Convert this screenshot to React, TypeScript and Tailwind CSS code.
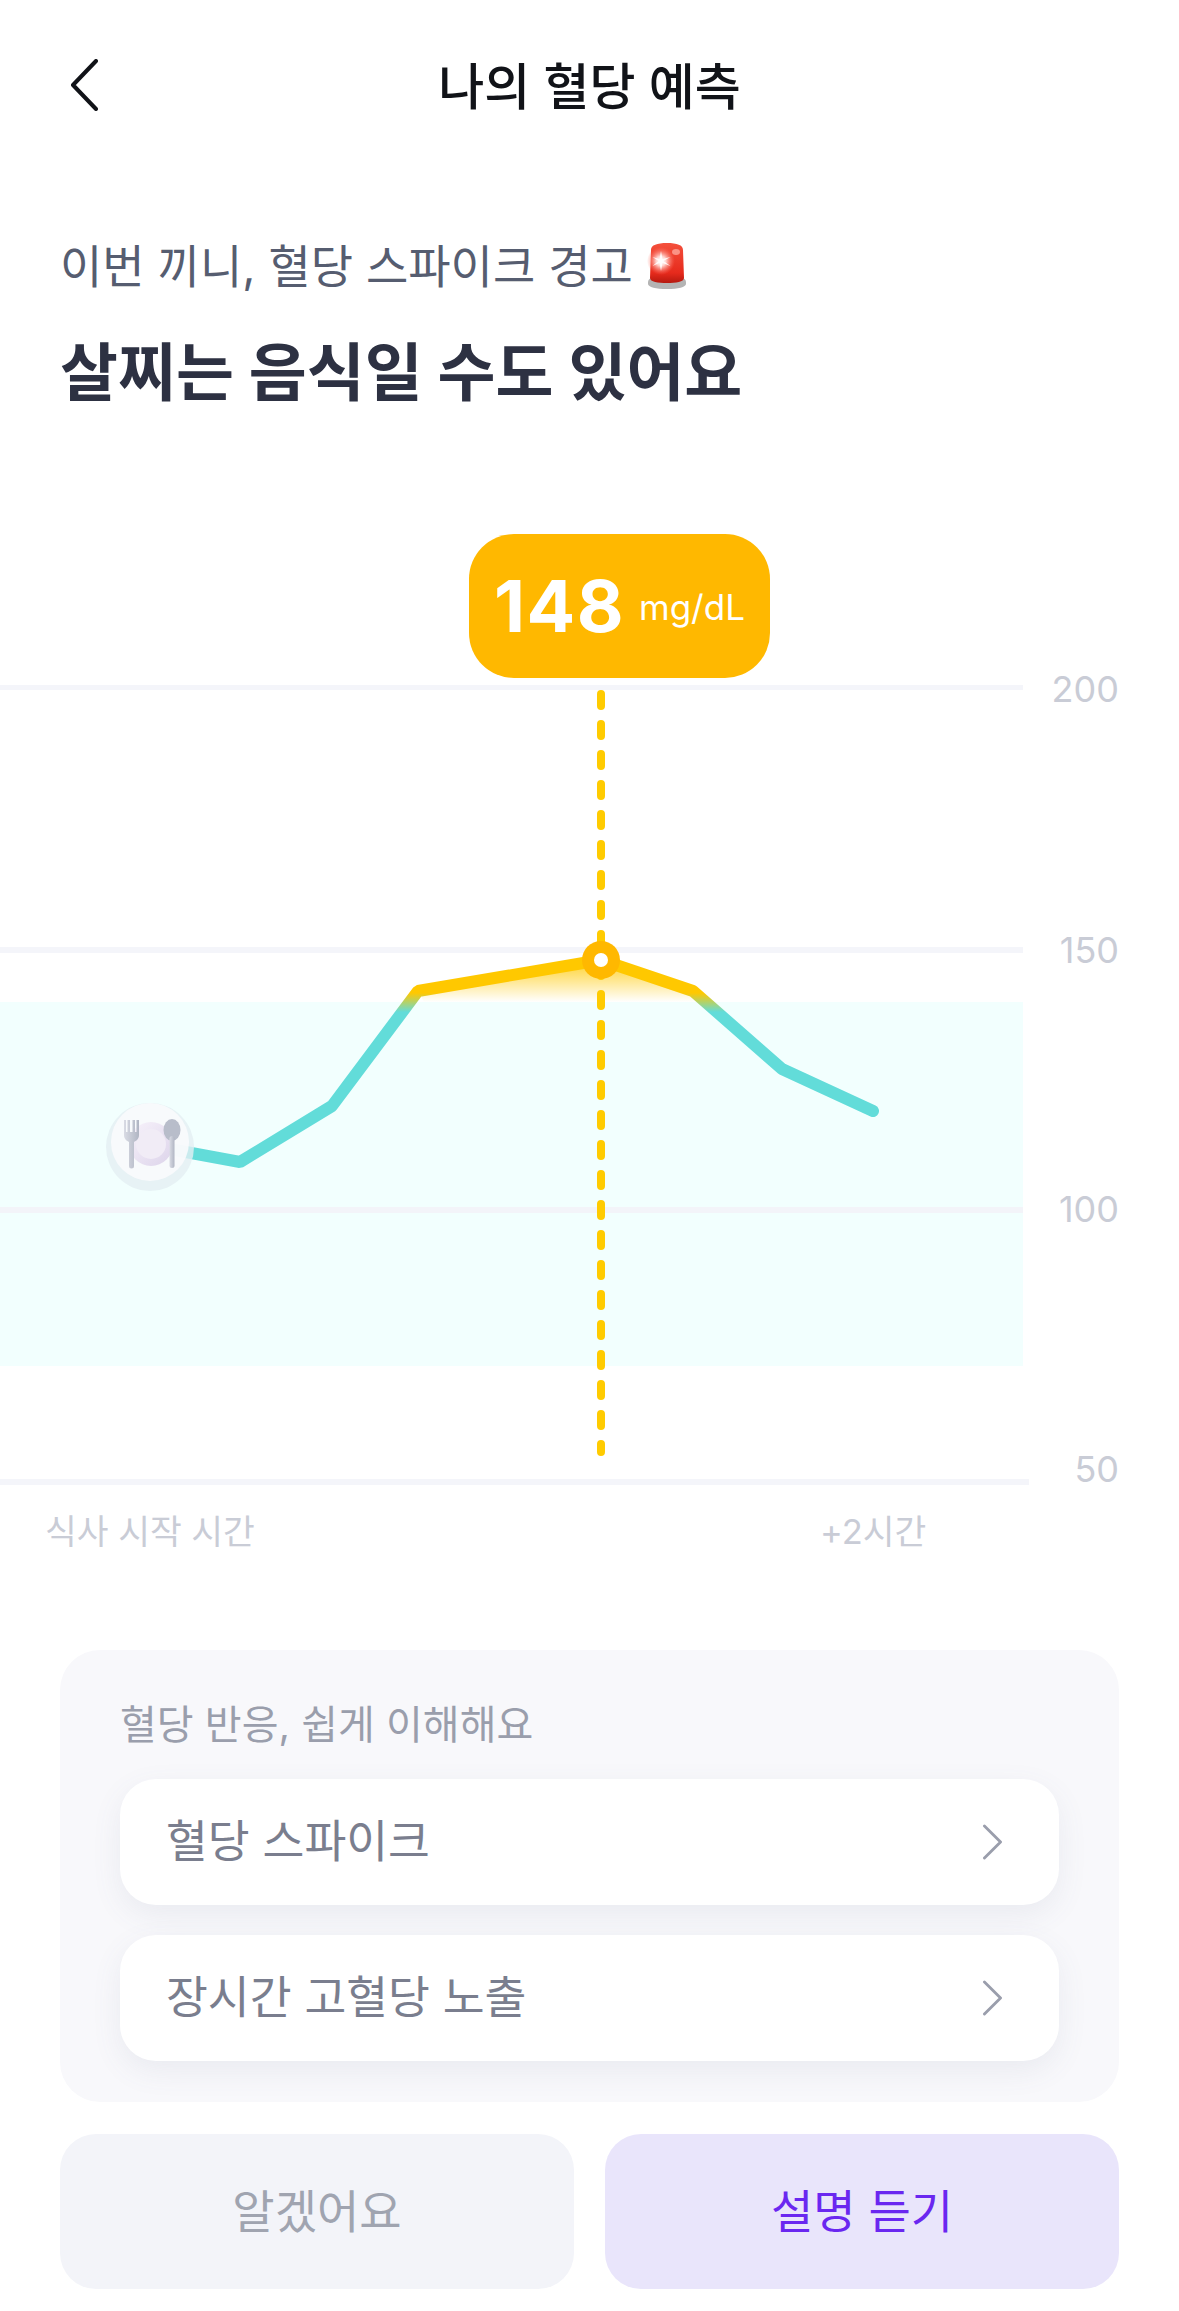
const fontStack = { fontFamily: 'Inter, "Noto Sans CJK KR", sans-serif' }

const linePoints = '175,1150 240,1162 332,1106 418,991 601,960 693,991 782,1069 873,1111'

function SirenIcon() {
  return (
    <svg viewBox="0 0 40 48" className="h-[48px] w-[40px]">
      <defs>
        <linearGradient id="sirenBody" x1="0" y1="0" x2="0" y2="1">
          <stop offset="0" stopColor="#f4503c" />
          <stop offset="0.75" stopColor="#e62a1c" />
          <stop offset="1" stopColor="#b5190f" />
        </linearGradient>
        <radialGradient id="sirenFlash">
          <stop offset="0" stopColor="#ffffff" />
          <stop offset="0.35" stopColor="#ffd5cf" />
          <stop offset="1" stopColor="#ff6b5c" stopOpacity="0" />
        </radialGradient>
      </defs>
      <path d="M1 40c0-2 2-4 4-4h30c2 0 4 2 4 4v2c0 3-8 5-19 5S1 45 1 42z" fill="#b4b4b4" />
      <path d="M4 8c0-5 6-7 16-7s16 2 16 7l1 28c0 4-8 5-17 5S3 40 3 36z" fill="url(#sirenBody)" />
      <circle cx="14" cy="19" r="14" fill="url(#sirenFlash)" />
      <path d="M14 9l1.500 8 8-2-7 4 7 5-8-3-1.500 8-1.500-8-7 3 6-5-6-4 7 2z" fill="#ffffff" opacity="0.85" />
      <ellipse cx="29" cy="10" rx="4" ry="3" fill="#ffb3a8" opacity="0.7" />
    </svg>
  )
}

function Chevron({ className }: { className: string }) {
  return (
    <svg viewBox="0 0 21 38" fill="none" className={className}>
      <path d="M2 2l17 17L2 36" stroke="currentColor" strokeWidth="3" strokeLinecap="round" strokeLinejoin="round" />
    </svg>
  )
}

function GlucoseChart() {
  return (
    <svg viewBox="0 534 1179 1030" className="absolute inset-0 h-full w-full" fill="none">
      <defs>
        <linearGradient id="curveStroke" gradientUnits="userSpaceOnUse" x1="0" y1="993" x2="0" y2="1012">
          <stop offset="0" stopColor="#ffc800" />
          <stop offset="1" stopColor="#62dcd9" />
        </linearGradient>
        <linearGradient id="overFill" gradientUnits="userSpaceOnUse" x1="0" y1="965" x2="0" y2="1002">
          <stop offset="0" stopColor="#ffc800" stopOpacity="0.75" />
          <stop offset="1" stopColor="#ffc800" stopOpacity="0" />
        </linearGradient>
        <linearGradient id="plate" x1="0" y1="0" x2="1" y2="1">
          <stop offset="0" stopColor="#f8f3fb" />
          <stop offset="1" stopColor="#dcd3ea" />
        </linearGradient>
        <linearGradient id="cutlery" x1="0" y1="0" x2="1" y2="0">
          <stop offset="0" stopColor="#d9dbe4" />
          <stop offset="1" stopColor="#b0b5c3" />
        </linearGradient>
      </defs>

      <rect x="0" y="1002" width="1023" height="364" fill="#f2fffe" />
      <rect x="0" y="685" width="1023" height="5" fill="#f4f5fa" />
      <rect x="0" y="947" width="1023" height="6" fill="#f4f5fa" />
      <rect x="0" y="1207" width="1023" height="6" fill="#f3f4f9" />
      <rect x="0" y="1479" width="1029" height="6" fill="#f4f5fa" />

      <polygon points="424,1002 418,991 601,960 693,991 708,1002" fill="url(#overFill)" />
      <polyline points={linePoints} stroke="url(#curveStroke)" strokeWidth="12" strokeLinecap="round" strokeLinejoin="bevel" />
      <line x1="601" y1="694" x2="601" y2="1452" stroke="#ffcb00" strokeWidth="8" strokeLinecap="round" strokeDasharray="12 18" />

      <circle cx="601" cy="960" r="19" fill="#ffb800" />
      <circle cx="601" cy="960" r="7" fill="#ffffff" />

      <circle cx="150" cy="1147" r="44" fill="#e4eff2" opacity="0.8" />
      <circle cx="150" cy="1142" r="39" fill="#fbfafd" opacity="0.88" />
      <circle cx="151" cy="1144" r="22" fill="url(#plate)" />
      <circle cx="151" cy="1144" r="15" fill="#f1ecf6" />
      <path d="M124 1120v15c0 4 3 6 5 7v24a2.500 2.500 0 0 0 5 0v-24c2-1 5-3 5-7v-15h-2.500v12h-1.500v-12h-2.500v12H130v-12h-2.500v12H126v-12z" fill="url(#cutlery)" />
      <ellipse cx="172" cy="1130" rx="8.500" ry="11" fill="#b8bdca" />
      <rect x="169.500" y="1136" width="5" height="32" rx="2.500" fill="url(#cutlery)" />
    </svg>
  )
}

function InfoRow({ label }: { label: string }) {
  return (
    <div className="flex h-[126px] items-center justify-between rounded-[36px] bg-white pr-[56px] pl-[46px] shadow-[0_10px_30px_rgba(90,95,130,0.09)]">
      <span className="text-[45.500px] text-[#7a7e8e]">{label}</span>
      <Chevron className="h-[36px] w-[21px] text-[#9a9eac]" />
    </div>
  )
}

export default function App() {
  return (
    <div className="h-[2311px] w-full overflow-hidden bg-white" style={fontStack}>
      <header className="relative flex h-[174px] items-center justify-center">
        <svg viewBox="0 0 28 52" fill="none" className="absolute top-[59px] left-[70px] h-[52px] w-[28px]">
          <path d="M26 2L3 26l23 24" stroke="#111318" strokeWidth="4" strokeLinecap="round" strokeLinejoin="round" />
        </svg>
        <h1 className="text-[50px] font-medium text-[#111318]">나의 혈당 예측</h1>
      </header>

      <section className="mt-[62px] px-[60px]">
        <div className="flex h-[60px] items-center gap-[14px]">
          <span className="text-[46px] text-[#565d70]">이번 끼니, 혈당 스파이크 경고</span>
          <SirenIcon />
        </div>
        <h2 className="mt-[40px] text-[63px] leading-[72px] font-bold text-[#2d3142]">살찌는 음식일 수도 있어요</h2>
      </section>

      <section className="relative mt-[126px] h-[1030px]">
        <GlucoseChart />
        <div className="absolute top-0 left-[469px] flex h-[144px] w-[301px] items-center justify-center gap-[14px] rounded-[45px] bg-[#ffb800] text-white">
          <span className="text-[72px] font-bold tracking-[0.02em]">148</span>
          <span className="mt-[2px] text-[35px]">mg/dL</span>
        </div>
        {[
          ['200', 'top-[131px]'],
          ['150', 'top-[392px]'],
          ['100', 'top-[651px]'],
          ['50', 'top-[911px]'],
        ].map(([value, top]) => (
          <span key={value} className={`absolute right-[60px] text-[36px] leading-[48px] text-[#c9ccd6] ${top}`}>
            {value}
          </span>
        ))}
        <span className="absolute top-[976px] left-[45px] text-[34.500px] leading-[44px] text-[#c9ccd6]">식사 시작 시간</span>
        <span className="absolute top-[976px] left-[820px] text-[34.500px] leading-[44px] text-[#c9ccd6]">+2시간</span>
      </section>

      <section className="mx-[60px] mt-[86px] h-[452px] rounded-[40px] bg-[#f8f8fb] px-[60px] pt-[50px]">
        <p className="text-[40px] leading-[50px] text-[#9a9eac]">혈당 반응, 쉽게 이해해요</p>
        <div className="mt-[29px] flex flex-col gap-[30px]">
          <InfoRow label="혈당 스파이크" />
          <InfoRow label="장시간 고혈당 노출" />
        </div>
      </section>

      <div className="mx-[60px] mt-[32px] flex gap-[31px]">
        <button type="button" className="h-[155px] flex-1 rounded-[36px] bg-[#f3f4f9] text-[46px] text-[#a0a4b0]">
          알겠어요
        </button>
        <button type="button" className="h-[155px] flex-1 rounded-[36px] bg-[#e9e5fb] text-[46px] text-[#6a27f0]">
          설명 듣기
        </button>
      </div>
    </div>
  )
}
